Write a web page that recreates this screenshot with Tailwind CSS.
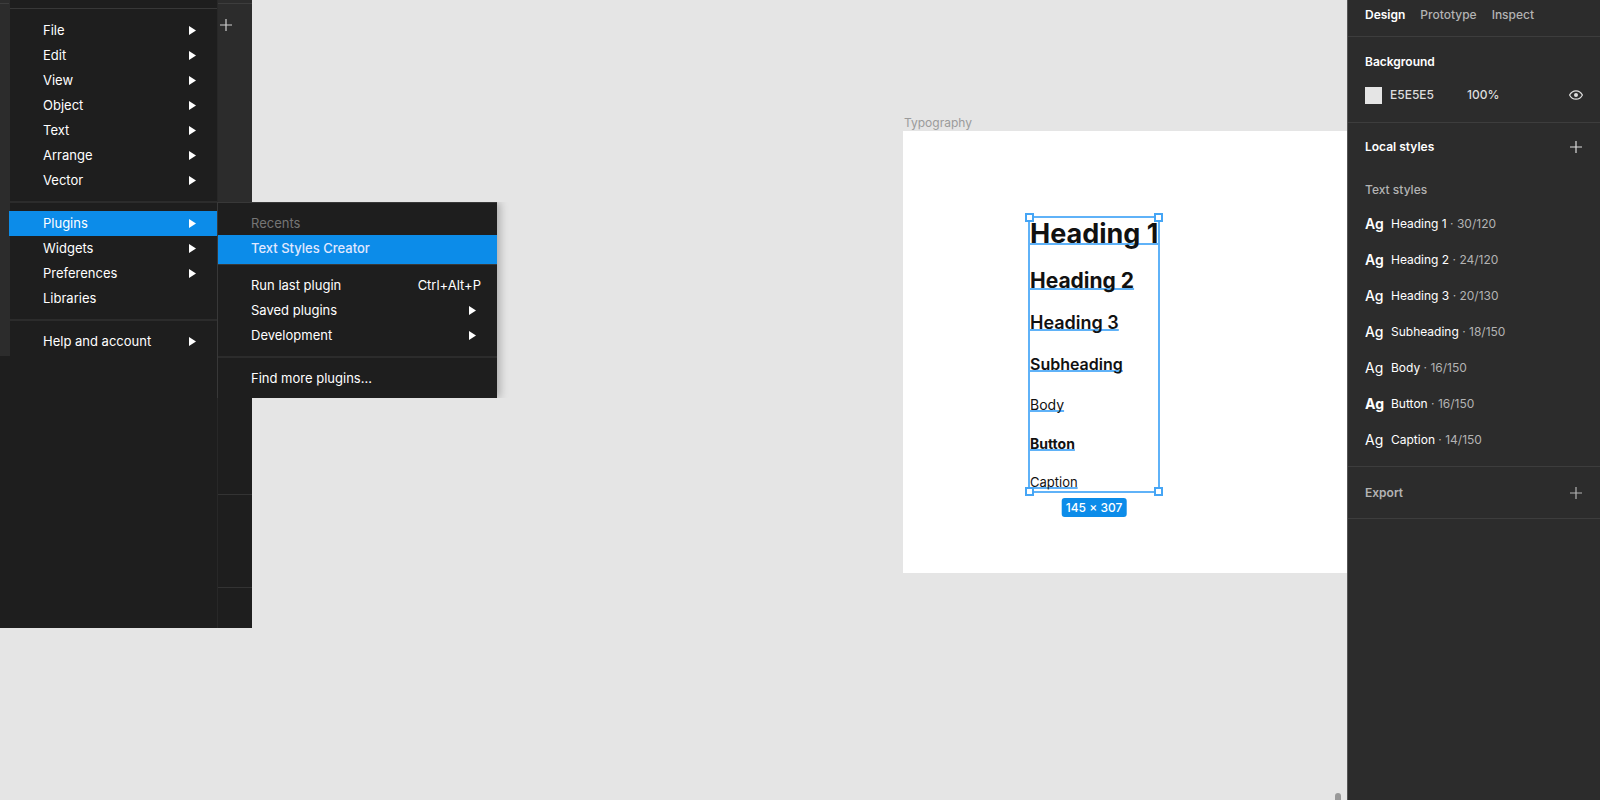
<!DOCTYPE html>
<html lang="en">
<head>
    <meta charset="utf-8"/>
    <meta content="width=device-width, initial-scale=1" name="viewport"/>
    <title>Typography</title>
    <script src="https://cdn.jsdelivr.net/npm/@tailwindcss/browser@4"></script>
</head>
<body class="flex min-h-screen overflow-hidden bg-[#e5e5e5] font-['Inter',sans-serif] text-[13px] leading-5 text-white">
    <svg class="hidden">
        <symbol id="arrow" viewBox="0 0 7 9"><path d="M0 0 7 4.500 0 9z" fill="currentColor"/></symbol>
        <symbol id="plus" viewBox="0 0 12 12"><path d="M6 0v12M0 6h12" stroke="currentColor" stroke-width="1.200"/></symbol>
    </svg>

    <!-- Canvas -->
    <main class="relative min-w-0 flex-1">
        <!-- Layers panel with the open menu -->
        <div class="flex h-[628px] w-[252px] bg-[#1e1e1e]">
            <div class="h-[356px] w-[9px] bg-[#2c2c2c] pt-[3px]">
                <div class="h-px bg-[#3d3d3d]"></div>
            </div>
            <nav aria-label="Main menu" class="h-[356px] flex-1 border-l border-[#2c2c2c]">
                <div class="pt-2 pb-[9px]"><hr class="border-[#383838]"/></div>
                <button type="button" class="flex h-[25px] w-full items-center justify-between pr-[21px] pb-px pl-[33px]">File<svg class="h-[9px] w-[7px]"><use href="#arrow"/></svg></button>
                <button type="button" class="flex h-[25px] w-full items-center justify-between pr-[21px] pb-px pl-[33px]">Edit<svg class="h-[9px] w-[7px]"><use href="#arrow"/></svg></button>
                <button type="button" class="flex h-[25px] w-full items-center justify-between pr-[21px] pb-px pl-[33px]">View<svg class="h-[9px] w-[7px]"><use href="#arrow"/></svg></button>
                <button type="button" class="flex h-[25px] w-full items-center justify-between pr-[21px] pb-px pl-[33px]">Object<svg class="h-[9px] w-[7px]"><use href="#arrow"/></svg></button>
                <button type="button" class="flex h-[25px] w-full items-center justify-between pr-[21px] pb-px pl-[33px]">Text<svg class="h-[9px] w-[7px]"><use href="#arrow"/></svg></button>
                <button type="button" class="flex h-[25px] w-full items-center justify-between pr-[21px] pb-px pl-[33px]">Arrange<svg class="h-[9px] w-[7px]"><use href="#arrow"/></svg></button>
                <button type="button" class="flex h-[25px] w-full items-center justify-between pr-[21px] pb-px pl-[33px]">Vector<svg class="h-[9px] w-[7px]"><use href="#arrow"/></svg></button>
                <div class="py-2"><hr class="border-t-2 border-[#2c2c2c]"/></div>
                <button type="button" class="-ml-px flex h-[25px] w-[calc(100%+1px)] items-center justify-between bg-[#0c8ce9] pr-[21px] pb-px pl-[34px]">Plugins<svg class="h-[9px] w-[7px]"><use href="#arrow"/></svg></button>
                <button type="button" class="flex h-[25px] w-full items-center justify-between pr-[21px] pb-px pl-[33px]">Widgets<svg class="h-[9px] w-[7px]"><use href="#arrow"/></svg></button>
                <button type="button" class="flex h-[25px] w-full items-center justify-between pr-[21px] pb-px pl-[33px]">Preferences<svg class="h-[9px] w-[7px]"><use href="#arrow"/></svg></button>
                <button type="button" class="flex h-[25px] w-full items-center pb-px pl-[33px]">Libraries</button>
                <div class="py-2"><hr class="border-t-2 border-[#2c2c2c]"/></div>
                <button type="button" class="flex h-[25px] w-full items-center justify-between pr-[21px] pb-px pl-[33px]">Help and account<svg class="h-[9px] w-[7px]"><use href="#arrow"/></svg></button>
            </nav>
            <div class="flex w-[35px] flex-col border-l border-[#282828]">
                <div class="h-[202px] bg-[#2c2c2c] pt-[3px]">
                    <hr class="border-[#3d3d3d]"/>
                    <button type="button" aria-label="Add page" class="mt-[15px] ml-0.5 block text-[#d0d0d0]"><svg class="size-3"><use href="#plus"/></svg></button>
                </div>
                <div class="mt-[292px] h-[94px] border-y border-[#333]"></div>
            </div>
        </div>

        <!-- Plugins submenu, shadow only on the right -->
        <div class="absolute top-[202px] left-[217px] w-[296px] overflow-hidden pr-4">
            <div class="border-t border-l border-[#383838] bg-[#1e1e1e] pt-2 pb-[7px] shadow-[3px_0_8px_rgba(0,0,0,0.25)]">
                <div class="flex h-6 items-center pl-[33px] text-[#757575]">Recents</div>
                <button type="button" class="flex h-[29px] w-full items-center bg-[#0c8ce9] pb-1 pl-[33px] font-medium text-[#e0e8ff]">Text Styles Creator</button>
                <div class="pb-2"><hr class="border-[#383838]"/></div>
                <button type="button" class="flex h-[25px] w-full items-center justify-between pr-4 pb-px pl-[33px]">Run last plugin<span>Ctrl+Alt+P</span></button>
                <button type="button" class="flex h-[25px] w-full items-center justify-between pr-[21px] pb-px pl-[33px]">Saved plugins<svg class="h-[9px] w-[7px]"><use href="#arrow"/></svg></button>
                <button type="button" class="flex h-[25px] w-full items-center justify-between pr-[21px] pb-px pl-[33px]">Development<svg class="h-[9px] w-[7px]"><use href="#arrow"/></svg></button>
                <div class="py-2"><hr class="border-t-2 border-[#2c2c2c]"/></div>
                <button type="button" class="flex h-[25px] w-full items-center pb-px pl-[33px]">Find more plugins...</button>
            </div>
        </div>

        <!-- Frame -->
        <div class="absolute top-[113px] right-0 left-[903px]">
            <div class="h-[18px] pl-px text-xs leading-5 text-[#9b9b9b]">Typography</div>
            <div class="relative h-[442px] bg-white">
                <div class="absolute top-[85px] left-[125px] flex w-[132px] flex-col gap-[18px] border-2 border-[#5fb2f8] whitespace-nowrap text-[#111] [&_span]:underline [&_span]:decoration-[#5fb2f8] [&_span]:decoration-2 [&_span]:underline-offset-0 [&_span]:[text-decoration-skip-ink:none]">
                    <span class="text-[27px] leading-8 font-bold">Heading 1</span>
                    <span class="text-[21px] leading-[25px] font-bold">Heading 2</span>
                    <span class="text-[18px] leading-[23px] font-semibold">Heading 3</span>
                    <span class="text-[16px] leading-6 font-semibold">Subheading</span>
                    <span class="text-[14px] leading-[21px]">Body</span>
                    <span class="text-[14px] leading-[22px] font-bold">Button</span>
                    <span class="text-[13px] leading-[18px]">Caption</span>
                    <i class="absolute -top-[5px] -left-[5px] size-[9px] border-2 border-[#45a5f5] bg-white"></i>
                    <i class="absolute -top-[5px] -right-[5px] size-[9px] border-2 border-[#45a5f5] bg-white"></i>
                    <i class="absolute -bottom-[5px] -left-[5px] size-[9px] border-2 border-[#45a5f5] bg-white"></i>
                    <i class="absolute -right-[5px] -bottom-[5px] size-[9px] border-2 border-[#45a5f5] bg-white"></i>
                    <div class="absolute top-full left-1/2 mt-[7px] -translate-x-1/2 rounded-[3px] bg-[#0c8ce9] px-1 text-xs leading-[19px] font-medium text-white">145 × 307</div>
                </div>
            </div>
        </div>

        <div class="absolute right-1.5 bottom-0 h-[7px] w-1.5 rounded-t-full bg-[#999]"></div>
    </main>

    <!-- Properties panel -->
    <aside class="w-[253px] shrink-0 border-l border-[#555] bg-[#2c2c2c] text-xs font-medium">
        <div class="flex h-[37px] gap-[15px] border-b border-[#3d3d3d] pt-[5px] pl-[17px] leading-5 text-[#b3b3b3]">
            <button type="button" class="h-5 font-semibold text-white">Design</button>
            <button type="button" class="h-5">Prototype</button>
            <button type="button" class="h-5">Inspect</button>
        </div>
        <section class="h-[86px] border-b border-[#3d3d3d] pt-[15px] pr-[17px] pl-[17px]">
            <h2 class="leading-5 font-semibold">Background</h2>
            <div class="mt-[13px] flex h-5 items-center text-[#ddd]">
                <span class="size-[17px] bg-[#e5e5e5]"></span>
                <input aria-label="Background color" value="E5E5E5" class="ml-2 w-[77px]"/>
                <input aria-label="Background opacity" value="100%" class="w-12"/>
                <button type="button" aria-label="Toggle background" class="ml-auto">
                    <svg class="h-[10px] w-[14px]" viewBox="0 0 14 10" fill="none" stroke="currentColor" stroke-width="1.200">
                        <path d="M.6 5C2 2.300 4.300.800 7 .800s5 1.500 6.400 4.200C12 7.700 9.700 9.200 7 9.200S2 7.700.600 5z"/>
                        <circle cx="7" cy="5" r="2" fill="currentColor" stroke="none"/>
                    </svg>
                </button>
            </div>
        </section>
        <section class="border-b border-[#3d3d3d] pt-[14px] pr-[18px] pb-2 pl-[17px]">
            <div class="flex h-5 items-center justify-between">
                <h2 class="font-semibold">Local styles</h2>
                <button type="button" aria-label="Add style" class="text-[#ddd]"><svg class="size-3"><use href="#plus"/></svg></button>
            </div>
            <h3 class="mt-[23px] mb-[6px] leading-5 text-[#b3b3b3]">Text styles</h3>
            <ul class="font-normal text-[#b3b3b3]">
                <li class="flex h-9 items-center"><b class="w-[26px] text-sm font-semibold text-white">Ag</b><span class="text-white">Heading 1</span>&nbsp;· 30/120</li>
                <li class="flex h-9 items-center"><b class="w-[26px] text-sm font-semibold text-white">Ag</b><span class="text-white">Heading 2</span>&nbsp;· 24/120</li>
                <li class="flex h-9 items-center"><b class="w-[26px] text-sm font-medium text-white">Ag</b><span class="text-white">Heading 3</span>&nbsp;· 20/130</li>
                <li class="flex h-9 items-center"><b class="w-[26px] text-sm font-medium text-white">Ag</b><span class="text-white">Subheading</span>&nbsp;· 18/150</li>
                <li class="flex h-9 items-center"><b class="w-[26px] text-sm font-normal text-white">Ag</b><span class="text-white">Body</span>&nbsp;· 16/150</li>
                <li class="flex h-9 items-center"><b class="w-[26px] text-sm font-bold text-white">Ag</b><span class="text-white">Button</span>&nbsp;· 16/150</li>
                <li class="flex h-9 items-center"><b class="w-[26px] text-sm font-normal text-white">Ag</b><span class="text-white">Caption</span>&nbsp;· 14/150</li>
            </ul>
        </section>
        <section class="flex h-[52px] items-center justify-between border-b border-[#3d3d3d] pr-[18px] pl-[17px] text-[#b3b3b3]">
            <h2 class="font-semibold">Export</h2>
            <button type="button" aria-label="Add export"><svg class="size-3"><use href="#plus"/></svg></button>
        </section>
    </aside>
</body>
</html>
